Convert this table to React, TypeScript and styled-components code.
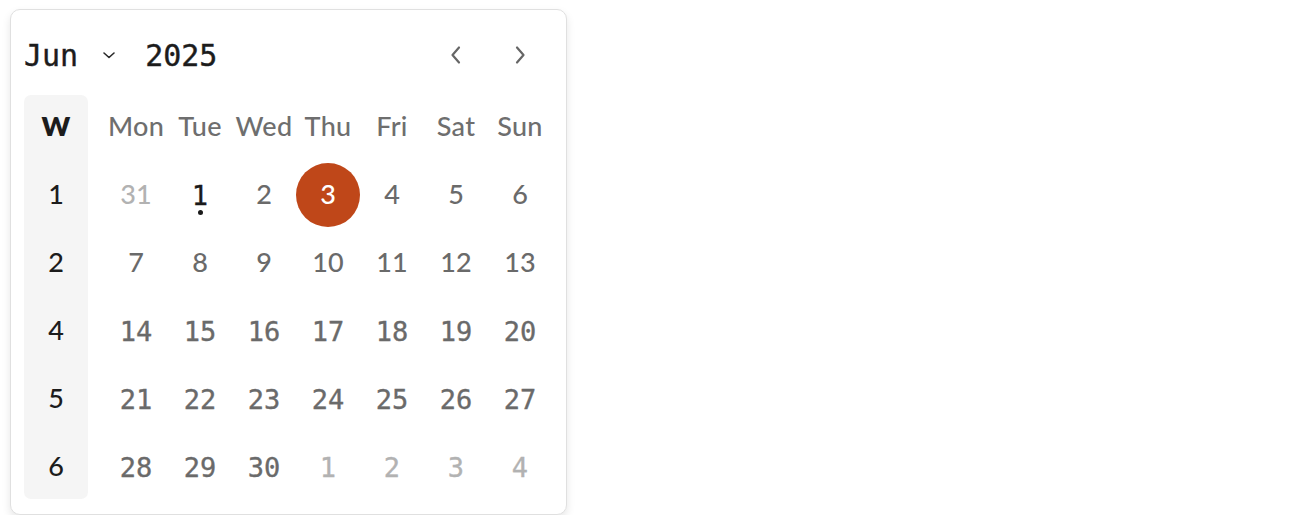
import React from "react";
import styled, { createGlobalStyle } from "styled-components";

const Global = createGlobalStyle`
  html, body { margin: 0; padding: 0; background: #ffffff; }
  body { font-family: "Lato", "Liberation Sans", sans-serif; }
`;

const Page = styled.div`
  padding: 9px 0 0 10px;
`;

const Card = styled.div`
  width: 557px;
  height: 506px;
  box-sizing: border-box;
  border: 1px solid #e0e0e0;
  border-radius: 10px;
  background: #fff;
  box-shadow: 0 4px 8px rgba(0, 0, 0, 0.1);
  padding: 24px 14px 15px 13px;
`;

const Header = styled.div`
  height: 42px;
  display: flex;
  align-items: center;
  margin-bottom: 19px;
`;

const MonthButton = styled.button`
  all: unset;
  display: flex;
  align-items: center;
  height: 42px;
  gap: 24px;
  margin-right: 29px;
  font-family: "DejaVu Sans Mono", "Liberation Mono", monospace;
  font-size: 30px;
  color: #1c1c1c;
  -webkit-text-stroke: 0.4px #1c1c1c;
`;

const YearLabel = styled.span`
  font-family: "DejaVu Sans Mono", "Liberation Mono", monospace;
  font-size: 30px;
  color: #1c1c1c;
  -webkit-text-stroke: 0.4px #1c1c1c;
  flex: 1;
`;

const NavButton = styled.button`
  all: unset;
  width: 64px;
  height: 42px;
  display: flex;
  align-items: center;
  justify-content: center;
  color: #666;
`;

const Body = styled.div`
  display: flex;
  gap: 16px;
`;

const WeekCol = styled.div`
  width: 64px;
  display: grid;
  grid-template-rows: repeat(6, 64px);
  row-gap: 4px;
  background: #f5f5f5;
  border-radius: 7px;
`;

const WeekCell = styled.div<{ $head?: boolean }>`
  display: flex;
  align-items: center;
  justify-content: center;
  box-sizing: border-box;
  padding-bottom: 3px;
  font-family: "Lato", sans-serif;
  font-size: 27px;
  font-weight: ${(p) => (p.$head ? 800 : 500)};
  color: #1c1c1c;
`;

const DaysGrid = styled.div`
  display: grid;
  grid-template-columns: repeat(7, 64px);
  grid-auto-rows: 64px;
  row-gap: 4px;
`;

const DayHead = styled.div`
  display: flex;
  align-items: center;
  justify-content: center;
  box-sizing: border-box;
  padding-bottom: 3px;
  font-family: "Lato", sans-serif;
  font-size: 27px;
  font-weight: 500;
  color: #6e6e6e;
  letter-spacing: 0.3px;
`;

const Day = styled.div<{ $mono?: boolean; $muted?: boolean; $selected?: boolean; $today?: boolean }>`
  position: relative;
  display: flex;
  align-items: center;
  justify-content: center;
  box-sizing: border-box;
  padding-bottom: ${(p) => (p.$mono ? "0" : "3px")};
  border-radius: 50%;
  font-family: ${(p) => (p.$mono ? `"DejaVu Sans Mono", "Liberation Mono", monospace` : `"Lato", sans-serif`)};
  font-size: 27px;
  font-weight: ${(p) => (p.$mono ? 400 : 500)};
  -webkit-text-stroke: ${(p) => (p.$mono ? "0.35px currentColor" : "0")};
  color: ${(p) => (p.$selected ? "#fff" : p.$today ? "#1a1a1a" : p.$muted ? "#b2b2b2" : "#6a6a6a")};
  background: ${(p) => (p.$selected ? "#bf4719" : "transparent")};
`;

const TodayDot = styled.span`
  position: absolute;
  left: 50%;
  top: 47px;
  width: 5px;
  height: 5px;
  margin-left: -2.5px;
  border-radius: 50%;
  background: #1a1a1a;
`;

const ChevronDown = () => (
  <svg width="14" height="12" viewBox="0 0 14 12" fill="none">
    <path d="M2 4L7 8.5L12 4" stroke="#2a2a2a" strokeWidth="1.6" strokeLinecap="round" strokeLinejoin="round" />
  </svg>
);

const ChevronLeft = () => (
  <svg width="16" height="22" viewBox="0 0 16 22" fill="none">
    <path d="M11 3.5L4.5 11L11 18.5" stroke="#666" strokeWidth="2.2" strokeLinecap="round" strokeLinejoin="round" />
  </svg>
);

const ChevronRight = () => (
  <svg width="16" height="22" viewBox="0 0 16 22" fill="none">
    <path d="M5 3.5L11.5 11L5 18.5" stroke="#666" strokeWidth="2.2" strokeLinecap="round" strokeLinejoin="round" />
  </svg>
);

type DayInfo = { n: number; muted?: boolean; selected?: boolean; today?: boolean; mono?: boolean };

const weeks: { week: number; mono: boolean; days: DayInfo[] }[] = [
  {
    week: 1,
    mono: false,
    days: [
      { n: 31, muted: true },
      { n: 1, today: true, mono: true },
      { n: 2 },
      { n: 3, selected: true },
      { n: 4 },
      { n: 5 },
      { n: 6 },
    ],
  },
  { week: 2, mono: false, days: [7, 8, 9, 10, 11, 12, 13].map((n) => ({ n })) },
  { week: 4, mono: true, days: [14, 15, 16, 17, 18, 19, 20].map((n) => ({ n })) },
  { week: 5, mono: true, days: [21, 22, 23, 24, 25, 26, 27].map((n) => ({ n })) },
  {
    week: 6,
    mono: true,
    days: [
      { n: 28 },
      { n: 29 },
      { n: 30 },
      { n: 1, muted: true },
      { n: 2, muted: true },
      { n: 3, muted: true },
      { n: 4, muted: true },
    ],
  },
];

const dayNames = ["Mon", "Tue", "Wed", "Thu", "Fri", "Sat", "Sun"];

export default function App() {
  return (
    <>
      <Global />
      <Page>
        <Card>
          <Header>
            <MonthButton>
              Jun
              <ChevronDown />
            </MonthButton>
            <YearLabel>2025</YearLabel>
            <NavButton aria-label="Previous month">
              <ChevronLeft />
            </NavButton>
            <NavButton aria-label="Next month">
              <ChevronRight />
            </NavButton>
          </Header>
          <Body>
            <WeekCol>
              <WeekCell $head>W</WeekCell>
              {weeks.map((w) => (
                <WeekCell key={w.week}>{w.week}</WeekCell>
              ))}
            </WeekCol>
            <DaysGrid>
              {dayNames.map((d) => (
                <DayHead key={d}>{d}</DayHead>
              ))}
              {weeks.map((w) =>
                w.days.map((d, i) => (
                  <Day
                    key={`${w.week}-${i}`}
                    $mono={d.mono ?? w.mono}
                    $muted={d.muted}
                    $selected={d.selected}
                    $today={d.today}
                  >
                    {d.n}
                    {d.today && <TodayDot />}
                  </Day>
                ))
              )}
            </DaysGrid>
          </Body>
        </Card>
      </Page>
    </>
  );
}
